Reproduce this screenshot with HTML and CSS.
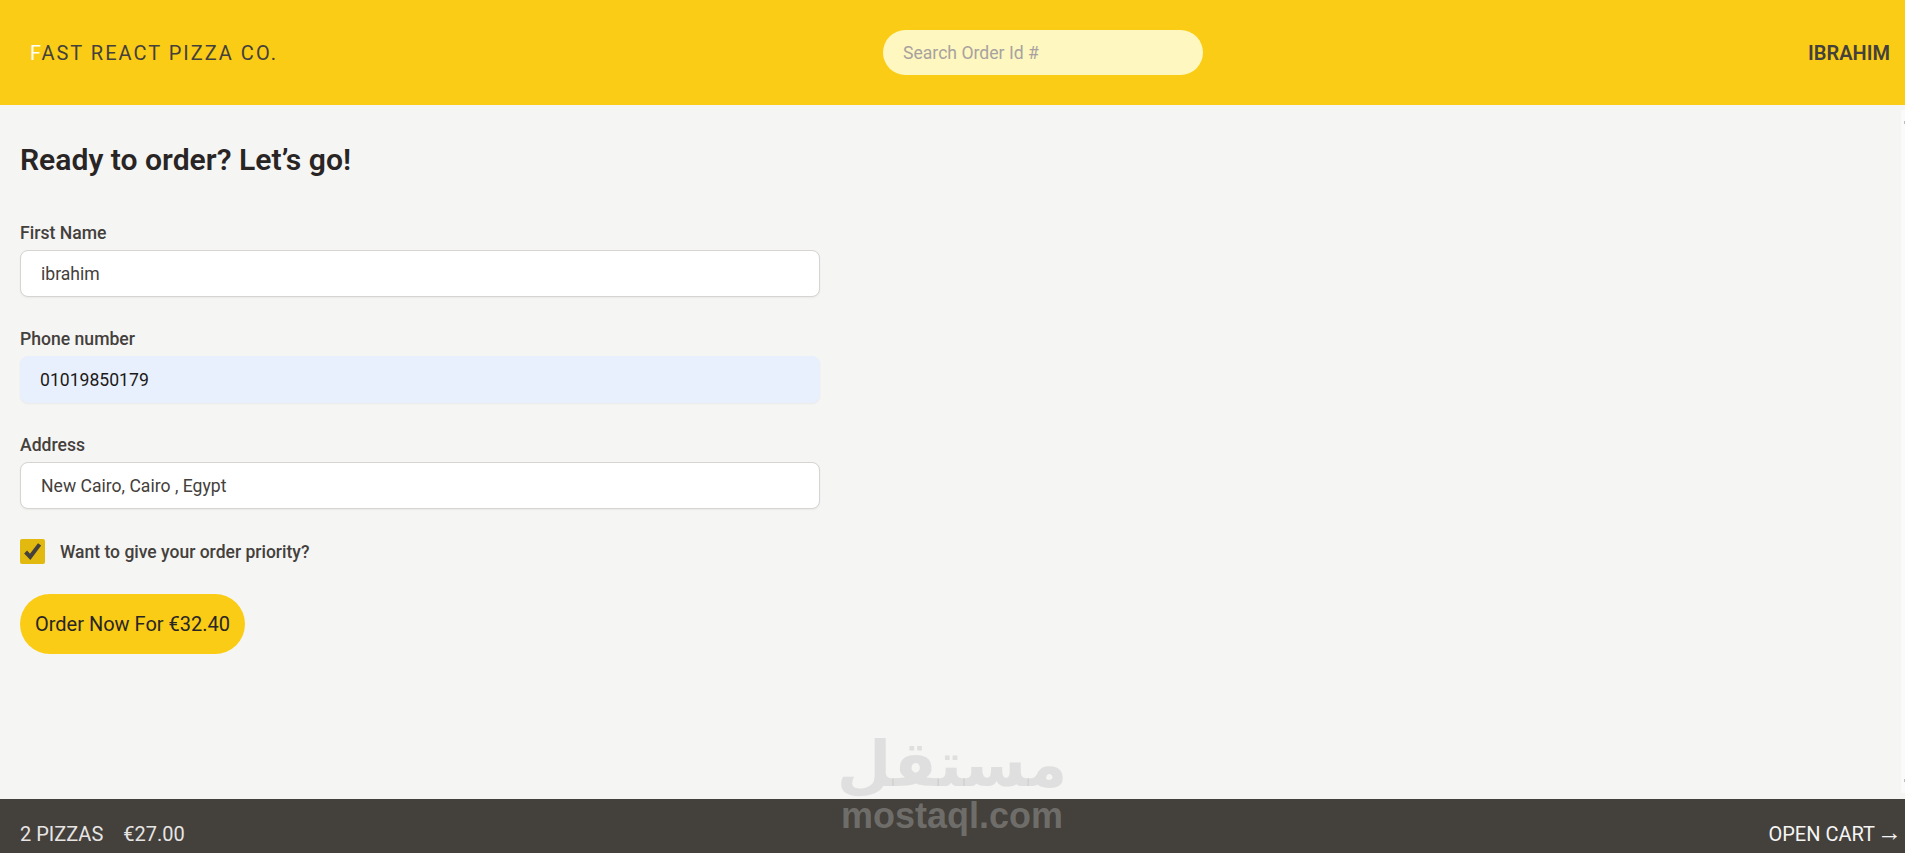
FILE: index.html
```html
<!DOCTYPE html>
<html lang="en">
<head>
<meta charset="utf-8">
<title>Fast React Pizza Co.</title>
<link rel="stylesheet" href="styles.css">
</head>
<body>
<div class="app">
  <header class="header">
    <a class="logo"><span class="logo-first">F</span>ast React Pizza Co.</a>
    <input class="search" placeholder="Search Order Id #">
    <span class="user">Ibrahim</span>
  </header>
  <main class="main">
    <h2 class="title">Ready to order? Let’s go!</h2>
    <form class="form">
      <div class="field">
        <label class="label">First Name</label>
        <input class="input" value="ibrahim">
      </div>
      <div class="field">
        <label class="label">Phone number</label>
        <input class="input input-autofill" value="01019850179">
      </div>
      <div class="field">
        <label class="label">Address</label>
        <input class="input" value="New Cairo, Cairo , Egypt">
      </div>
      <div class="priority">
        <span class="checkbox">
          <svg viewBox="0 0 25 25" width="25" height="25"><path d="M5.6 13l4.6 4.8L19.6 5.4" fill="none" stroke="#44403c" stroke-width="4"/></svg>
        </span>
        <span class="priority-text">Want to give your order priority?</span>
      </div>
      <button type="button" class="order">Order Now For €32.40</button>
    </form>
  </main>
  <footer class="footer">
    <p class="summary"><span>2 Pizzas</span><span>€27.00</span></p>
    <a class="cart">Open cart<span class="arrow">→</span></a>
  </footer>
</div>
<div class="scrollbar"><span class="tick"></span><span class="tick"></span></div>
<div class="watermark">
  <span class="wm-ar" dir="rtl" lang="ar">مستقل</span>
  <span class="wm-en">mostaql.com</span>
</div>
</body>
</html>
```
FILE: styles.css
```css
* { box-sizing: border-box; }
html, body { margin: 0; height: 100%; overflow: hidden; }
body { font-family: Roboto, sans-serif; color: #292524; background: #f5f5f4; }
.app { height: 853px; display: grid; grid-template-rows: 105px 1fr 54px; }
.header { background: #facc15; display: flex; align-items: center; justify-content: space-between; padding: 0 15px 0 30px; }
.logo { font-size: 20px; letter-spacing: 0.1em; text-transform: uppercase; color: #44403c; }
.logo-first { color: #fff; }
.search { width: 320px; height: 45px; border: 0; border-radius: 999px; background: #fef7c0; padding: 0 20px; font: 17.6px Roboto, sans-serif; outline: none; }
.search::placeholder { color: #a8a29e; }
.user { font-size: 20px; font-weight: 600; text-transform: uppercase; color: #44403c; }
.main { padding: 37px 20px 0; }
.title { margin: 0 0 43px; font-size: 30.1px; line-height: 36px; font-weight: 600; }
.form { width: 800px; display: flex; flex-direction: column; }
.field { display: flex; flex-direction: column; margin-bottom: 30px; }
.label { font-size: 17.6px; font-weight: 500; line-height: 24px; color: #44403c; margin-bottom: 5px; }
.input { height: 47px; border: 1px solid #d6d3d1; border-radius: 8px; background: #fff; padding: 0 20px; font: 17.6px Roboto, sans-serif; color: #44403c; box-shadow: 0 1px 2px rgba(0,0,0,.05); outline: none; }
.input-autofill { background: #e8f0fe; border-color: #e8f0fe; color: #1c1917; padding: 0 19px; }
.priority { display: flex; align-items: center; gap: 15px; margin-bottom: 30px; }
.checkbox { width: 25px; height: 25px; background: #e2b90e; border-radius: 2px; display: block; }
.checkbox svg { display: block; }
.priority-text { font-size: 17.5px; font-weight: 500; color: #44403c; }
.order { align-self: flex-start; height: 60px; width: 225px; border: 0; border-radius: 999px; background: #facc15; font: 20px Roboto, sans-serif; color: #292524; padding: 0; }
.footer { background: #44403c; display: flex; align-items: center; justify-content: space-between; padding: 16px 3px 0 20px; color: #e7e5e4; font-size: 20px; text-transform: uppercase; }
.summary { margin: 0; display: flex; gap: 20px; }
.cart { color: #f5f5f4; }
.arrow { font-family: "Liberation Sans", sans-serif; font-size: 25px; line-height: 0; margin-left: 2px; }
.scrollbar { position: absolute; right: 0; top: 110px; bottom: 60px; width: 4px; background: #fafafa; padding: 11px 0; display: flex; flex-direction: column; justify-content: space-between; align-items: flex-end; }
.tick { width: 1px; height: 3px; background: #bdbdbd; }
.watermark { position: absolute; left: 839px; top: 733px; width: 226px; display: flex; flex-direction: column; align-items: center; pointer-events: none; }
.wm-ar { font-family: "DejaVu Sans", sans-serif; font-weight: 700; font-size: 63px; line-height: 64px; color: rgba(160,160,158,.25); }
.wm-en { font-family: "Liberation Sans", sans-serif; font-weight: 700; font-size: 36px; line-height: 38px; color: rgba(160,160,158,.47); }
```
